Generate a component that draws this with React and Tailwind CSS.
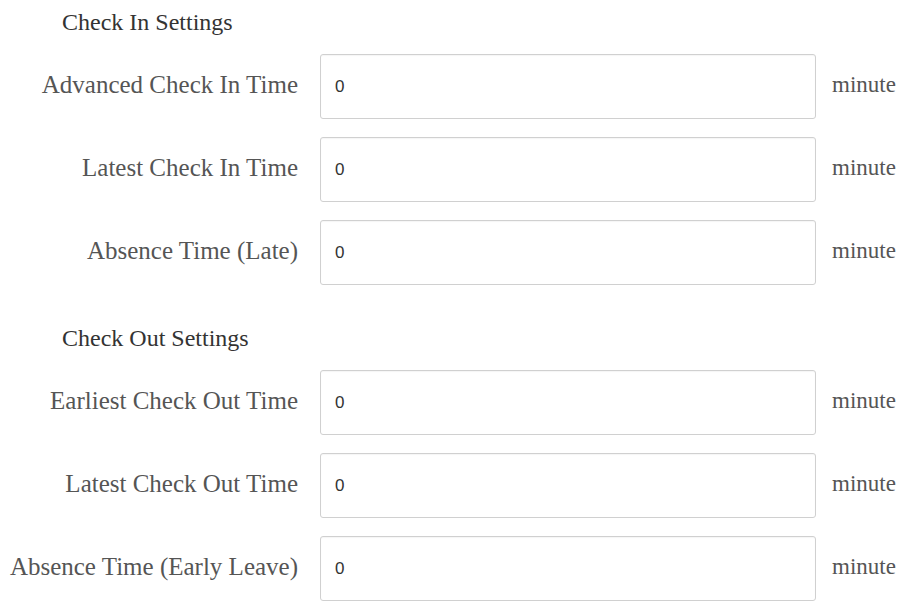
const sections = [
  {
    title: "Check In Settings",
    rows: ["Advanced Check In Time", "Latest Check In Time", "Absence Time (Late)"],
  },
  {
    title: "Check Out Settings",
    rows: ["Earliest Check Out Time", "Latest Check Out Time", "Absence Time (Early Leave)"],
  },
];

function Row({ label }) {
  return (
    <div className="flex items-center h-[65px]">
      <label className="w-[298px] shrink-0 text-right text-[25px] leading-[30px] pb-[4px] text-[#555] font-['Liberation_Serif',serif] whitespace-nowrap">
        {label}
      </label>
      <div className="ml-[22px] w-[496px] h-[65px] border border-[#d0d0d0] rounded-[3px] bg-white flex items-center px-[14px] shadow-[inset_0_1px_1px_rgba(0,0,0,0.04)]">
        <span className="text-[17px] text-[#333] font-['Liberation_Sans',sans-serif]">0</span>
      </div>
      <span className="ml-[16px] text-[23px] leading-[30px] pb-[4px] text-[#555] font-['Liberation_Serif',serif]">minute</span>
    </div>
  );
}

export default function App() {
  return (
    <div className="w-[910px] h-[604px] bg-white overflow-hidden pt-[8px]">
      {sections.map((s, i) => (
        <div key={s.title} className={i > 0 ? "mt-[39px]" : ""}>
          <h3 className="pl-[62px] h-[28px] leading-[28px] text-[24px] text-[#333] font-['Liberation_Serif',serif]">
            {s.title}
          </h3>
          <div className="mt-[18px] flex flex-col gap-[18px]">
            {s.rows.map((r) => (
              <Row key={r} label={r} />
            ))}
          </div>
        </div>
      ))}
    </div>
  );
}
